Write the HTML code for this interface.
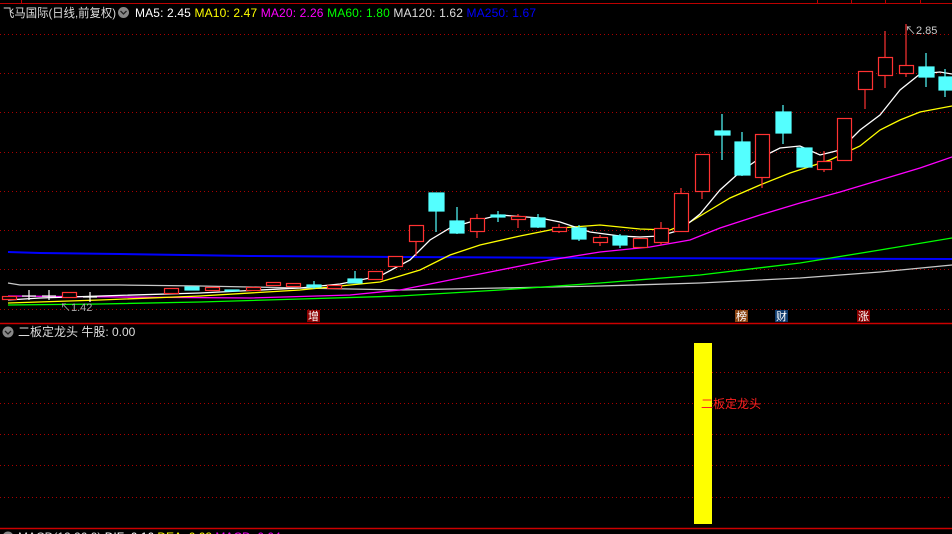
<!DOCTYPE html>
<html><head><meta charset="utf-8"><style>
html,body{margin:0;padding:0;background:#000;width:952px;height:534px;overflow:hidden}
svg{display:block}
text{font-family:"Liberation Sans","Noto Sans CJK SC",sans-serif}
</style></head><body>
<svg width="952" height="534" viewBox="0 0 952 534" xmlns="http://www.w3.org/2000/svg">
<rect width="952" height="534" fill="#000"/>
<line x1="0" y1="3.5" x2="952" y2="3.5" stroke="#b00" stroke-width="1"/>
<line x1="21.5" y1="0" x2="21.5" y2="3" stroke="#b00"/>
<line x1="817.5" y1="0" x2="817.5" y2="3" stroke="#b00"/>
<line x1="851.5" y1="0" x2="851.5" y2="3" stroke="#b00"/>
<line x1="885.5" y1="0" x2="885.5" y2="3" stroke="#b00"/>
<line x1="920.5" y1="0" x2="920.5" y2="3" stroke="#b00"/>
<g stroke="#a00" stroke-width="1" stroke-dasharray="1,3">
<line x1="0" y1="34.5" x2="952" y2="34.5"/>
<line x1="0" y1="73.5" x2="952" y2="73.5"/>
<line x1="0" y1="112.5" x2="952" y2="112.5"/>
<line x1="0" y1="152.5" x2="952" y2="152.5"/>
<line x1="0" y1="191.5" x2="952" y2="191.5"/>
<line x1="0" y1="230.5" x2="952" y2="230.5"/>
<line x1="0" y1="269.5" x2="952" y2="269.5"/>
<line x1="0" y1="309.5" x2="952" y2="309.5"/>
<line x1="0" y1="372.5" x2="952" y2="372.5"/>
<line x1="0" y1="403.5" x2="952" y2="403.5"/>
<line x1="0" y1="434.5" x2="952" y2="434.5"/>
<line x1="0" y1="465.5" x2="952" y2="465.5"/>
<line x1="0" y1="497.5" x2="952" y2="497.5"/>
</g>
<line x1="0" y1="323.5" x2="952" y2="323.5" stroke="#c00" stroke-width="1.5"/>
<line x1="0" y1="528.5" x2="952" y2="528.5" stroke="#c00" stroke-width="1.5"/>
<g fill="none" stroke-width="1.3">
<polyline stroke="#0000ff" stroke-width="2" points="8,252 40,253 120,254 250,256 400,257 600,258 952,259"/>
<polyline stroke="#c8c8c8" points="8,283 20,285 120,285 200,286 300,288 400,290 500,288 600,286 700,283 800,278 880,272 952,265"/>
<polyline stroke="#00ff00" points="8,305 100,304 200,302 300,299 400,296 500,290 600,283 700,275 800,263 880,250 952,238"/>
<polyline stroke="#ff00ff" points="8,296 120,297 250,298 350,295 400,290 450,280 500,270 550,260 600,252 650,247 690,240 720,228 760,215 800,203 840,192 880,180 920,168 952,157"/>
<polyline stroke="#ffff00" points="8,303 100,300 200,296 300,290 380,282 420,270 450,255 480,245 520,236 560,228 600,225 640,229 670,230 690,222 710,210 730,198 760,185 790,173 830,160 860,146 880,130 900,120 920,112 952,106"/>
<polyline stroke="#ffffff" points="8,300 40,298 100,296 200,293 300,288 340,284 380,276 410,260 430,240 450,228 470,222 500,215 540,218 560,222 590,232 620,236 640,237 660,236 680,230 700,214 720,190 740,172 760,158 780,148 800,146 820,155 840,150 860,130 880,115 900,90 920,74 940,72 952,74"/>
</g>
<g stroke-width="1.2">
<g stroke="#ff3232" fill="#000">
<line x1="681" y1="188" x2="681" y2="193"/><rect x="674.5" y="193.5" width="14" height="38"/>
<line x1="702" y1="191" x2="702" y2="199"/><rect x="695.5" y="154.5" width="14" height="37"/>
<line x1="762" y1="177" x2="762" y2="188"/><rect x="755.5" y="134.5" width="14" height="43"/>
<line x1="824" y1="151" x2="824" y2="172"/><rect x="817.5" y="161.5" width="14" height="8"/>
<rect x="837.5" y="118.5" width="14" height="42"/>
<line x1="865" y1="89" x2="865" y2="109"/><rect x="858.5" y="71.5" width="14" height="18"/>
<line x1="885" y1="31" x2="885" y2="88"/><rect x="878.5" y="57.5" width="14" height="18"/>
<line x1="906" y1="24" x2="906" y2="77"/><rect x="899.5" y="65.5" width="14" height="8"/>
<line x1="661" y1="222" x2="661" y2="245"/><rect x="654.5" y="228.5" width="14" height="14"/>
<rect x="633.5" y="238.5" width="14" height="9"/>
<line x1="600" y1="235" x2="600" y2="246"/><rect x="593.5" y="237.5" width="14" height="5"/>
<line x1="559" y1="224" x2="559" y2="233"/><rect x="552.5" y="227.5" width="14" height="4"/>
<line x1="518" y1="214" x2="518" y2="228"/><rect x="511.5" y="216.5" width="14" height="3"/>
<line x1="477" y1="214" x2="477" y2="238"/><rect x="470.5" y="218.5" width="14" height="13"/>
<line x1="416" y1="225" x2="416" y2="256"/><rect x="409.5" y="225.5" width="14" height="16"/>
<rect x="388.5" y="256.5" width="14" height="10"/>
<rect x="368.5" y="271.5" width="14" height="8"/>
<rect x="327.5" y="285.5" width="14" height="3"/>
<rect x="286.5" y="283.5" width="14" height="3"/>
<rect x="266.5" y="282.5" width="14" height="3"/>
<rect x="246.5" y="287.5" width="14" height="3"/>
<rect x="205.5" y="287.5" width="14" height="3"/>
<rect x="164.5" y="288.5" width="14" height="5"/>
<rect x="62.5" y="292.5" width="14" height="5"/>
<rect x="2.5" y="296.5" width="14" height="3"/>
</g>
<g stroke="#54ffff" fill="#54ffff">
<line x1="722" y1="114" x2="722" y2="160"/><rect x="715" y="131" width="15" height="4"/>
<line x1="742" y1="132" x2="742" y2="176"/><rect x="735" y="142" width="15" height="33"/>
<line x1="783" y1="105" x2="783" y2="144"/><rect x="776" y="112" width="15" height="21"/>
<rect x="797" y="148" width="15" height="19"/>
<line x1="926" y1="53" x2="926" y2="87"/><rect x="919" y="67" width="15" height="10"/>
<line x1="945" y1="69" x2="945" y2="97"/><rect x="939" y="77" width="13" height="13"/>
<line x1="620" y1="234" x2="620" y2="248"/><rect x="613" y="236" width="14" height="9"/>
<line x1="579" y1="225" x2="579" y2="241"/><rect x="572" y="228" width="14" height="11"/>
<line x1="538" y1="214" x2="538" y2="228"/><rect x="531" y="218" width="14" height="9"/>
<line x1="498" y1="211" x2="498" y2="222"/><rect x="491" y="215" width="14" height="2"/>
<line x1="457" y1="207" x2="457" y2="234"/><rect x="450" y="221" width="14" height="12"/>
<line x1="436" y1="211" x2="436" y2="232"/><rect x="429" y="193" width="15" height="18"/>
<line x1="355" y1="271" x2="355" y2="283"/><rect x="348" y="279" width="14" height="4"/>
<line x1="314" y1="281" x2="314" y2="289"/><rect x="307" y="285" width="14" height="2"/>
<rect x="225" y="290" width="14" height="1"/>
<rect x="185" y="287" width="14" height="3"/>
</g>
<g stroke="#fff">
<line x1="29" y1="290" x2="29" y2="300"/><line x1="22" y1="296" x2="36" y2="296"/>
<line x1="49" y1="290" x2="49" y2="300"/><line x1="42" y1="296" x2="56" y2="296"/>
<line x1="90" y1="292" x2="90" y2="302"/><line x1="83" y1="297" x2="97" y2="297"/>
</g>
</g>
<text x="60" y="311" fill="#aaa" font-size="11">↖1.42</text>
<text x="905" y="34" fill="#ccc" font-size="11">↖2.85</text>
<text x="3" y="17" fill="#ddd" font-size="12" textLength="113" lengthAdjust="spacingAndGlyphs">飞马国际(日线,前复权)</text>
<circle cx="123.5" cy="12.5" r="5.5" fill="#888"/>
<path d="M120.5 11 L123.5 14 L126.5 11" stroke="#222" fill="none" stroke-width="1.3"/>
<text x="135" y="17" font-size="12" textLength="401" lengthAdjust="spacing"><tspan fill="#fff">MA5: 2.45 </tspan><tspan fill="#ffff00">MA10: 2.47 </tspan><tspan fill="#ff00ff">MA20: 2.26 </tspan><tspan fill="#00ff00">MA60: 1.80 </tspan><tspan fill="#ddd">MA120: 1.62 </tspan><tspan fill="#0000ff">MA250: 1.67</tspan></text>
<rect x="307" y="310" width="13" height="12" fill="#8b0000"/><text x="313.5" y="320" fill="#fff" font-size="11" text-anchor="middle">增</text>
<rect x="735" y="310" width="13" height="12" fill="#8b4513"/><text x="741.5" y="320" fill="#fff" font-size="11" text-anchor="middle">榜</text>
<rect x="775" y="310" width="13" height="12" fill="#0f3c6e"/><text x="781.5" y="320" fill="#fff" font-size="11" text-anchor="middle">财</text>
<rect x="857" y="310" width="13" height="12" fill="#8b0000"/><text x="863.5" y="320" fill="#fff" font-size="11" text-anchor="middle">涨</text>
<circle cx="8" cy="332" r="5.5" fill="#888"/>
<path d="M5 331 L8 334 L11 331" stroke="#222" fill="none" stroke-width="1.3"/>
<text x="18" y="336" fill="#ddd" font-size="12">二板定龙头 牛股: 0.00</text>
<rect x="694" y="343" width="18" height="181" fill="#ffff00"/>
<text x="701" y="408" fill="#ff2020" font-size="12">二板定龙头</text>
<circle cx="8" cy="537" r="5.5" fill="#888"/>
<text x="18" y="541" font-size="12"><tspan fill="#ddd">MACD(12,26,9) </tspan><tspan fill="#fff">DIF: 0.16 </tspan><tspan fill="#ffff00">DEA: 0.08 </tspan><tspan fill="#ff00ff">MACD: 0.04</tspan></text>
</svg>
</body></html>
